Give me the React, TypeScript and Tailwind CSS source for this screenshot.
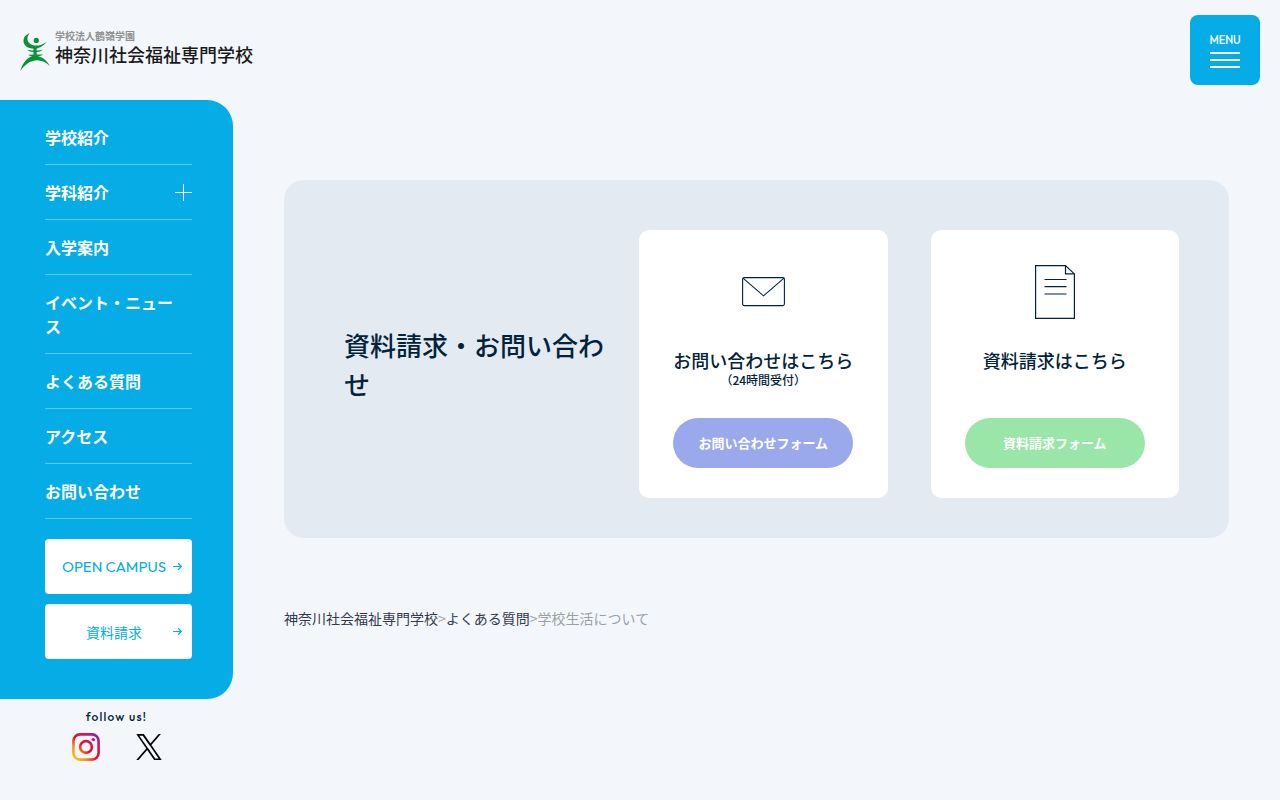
import type { ReactNode } from 'react';

interface NavItem {
  label: string;
  expandable?: boolean;
}

const NAV_ITEMS: NavItem[] = [
  { label: '学校紹介' },
  { label: '学科紹介', expandable: true },
  { label: '入学案内' },
  { label: 'イベント・ニュース' },
  { label: 'よくある質問' },
  { label: 'アクセス' },
  { label: 'お問い合わせ' },
];

function LogoMark() {
  return (
    <svg width="30" height="40" viewBox="0 0 30 40" fill="#0b9136" className="shrink-0" aria-hidden="true">
      <circle cx="16.3" cy="8.4" r="2.6" />
      <path d="M9.8 1.200C2 3.400 1 13 9.500 16c5.500 2 12.500.2 17-6.300-5 4-10.500 4.700-14.700 3C6.800 10.700 6 4.800 9.800 1.200Z" />
      <path d="M13.500 15.800h3.200c-.2 1.200-.2 2 0 2.700 2.100.1 4-.2 6-.8-1.700 1.500-3.600 2.100-6 2.300v2.400h6.500c-1.700 1.200-3.500 1.700-5.500 1.900 4.500.8 9 3.700 12 9.700-8-8.500-20.500-8.300-29.500 5.100C2.600 31 7 25.500 12 24.200c-1.600-.1-2.800-.6-3.800-1.500l5.300-.3V20c-2.700-.1-4.600-.7-6.200-2.200 2.200.6 4 .8 6.200.7Z" />
    </svg>
  );
}

function PlusIcon() {
  return (
    <svg width="17" height="17" viewBox="0 0 17 17" stroke="#fff" className="shrink-0" aria-hidden="true">
      <path d="M0 8.500h17M8.500 0v17" />
    </svg>
  );
}

function ArrowIcon() {
  return (
    <svg width="9" height="9" viewBox="0 0 9 9" fill="none" stroke="currentColor" strokeWidth="1.2" className="shrink-0" aria-hidden="true">
      <path d="M0 4.500h8.200M5 1.200 8.300 4.500 5 7.800" />
    </svg>
  );
}

function MailIcon() {
  return (
    <svg width="43" height="30" viewBox="0 0 43 30" fill="none" stroke="#02233a" strokeWidth="1.1" aria-hidden="true">
      <rect x="0.6" y="0.6" width="41.800" height="28" rx="1.500" />
      <path d="M1 1.100 21.500 18.800 42 1.100" />
    </svg>
  );
}

function DocumentIcon() {
  return (
    <svg width="40" height="54" viewBox="0 0 40 54" fill="none" stroke="#02233a" strokeWidth="1.200" aria-hidden="true">
      <path d="M.6.6h29.900l8.900 8.300v44.400H.6Z" />
      <path d="M30.500.6v8.300h8.900M9.500 14.500h22M9.500 21.700h22M9.500 29h22" />
    </svg>
  );
}

function InstagramIcon() {
  return (
    <svg width="28" height="28" viewBox="0 0 28 28" fill="none" aria-hidden="true">
      <defs>
        <linearGradient id="insta" x1="2" y1="26" x2="26" y2="2" gradientUnits="userSpaceOnUse">
          <stop offset="0" stopColor="#fdc70c" />
          <stop offset="0.25" stopColor="#f7921e" />
          <stop offset="0.45" stopColor="#e8101f" />
          <stop offset="0.75" stopColor="#d1145f" />
          <stop offset="1" stopColor="#8a1fb8" />
        </linearGradient>
      </defs>
      <rect x="1.400" y="1.400" width="25.200" height="25.200" rx="6.500" stroke="url(#insta)" strokeWidth="2.600" />
      <circle cx="14" cy="14" r="5.900" stroke="url(#insta)" strokeWidth="2.600" />
      <circle cx="21.400" cy="6.600" r="1.700" fill="url(#insta)" />
    </svg>
  );
}

function XIcon() {
  return (
    <svg width="26" height="26" viewBox="0 0 24 24" fill="#000" aria-hidden="true">
      <path d="M14.234 10.162 22.977 0h-2.072l-7.591 8.824L7.251 0H.258l9.168 13.343L.258 24H2.33l8.016-9.318L16.749 24h6.993zm-2.837 3.299-.929-1.329L3.076 1.560h3.182l5.965 8.532.929 1.329 7.754 11.090h-3.182z" />
    </svg>
  );
}

function SiteHeader() {
  return (
    <header className="flex h-[100px] items-center justify-between px-5">
      <a href="#" className="flex items-center gap-[5px] pt-1">
        <LogoMark />
        <span className="flex flex-col pb-2">
          <span className="text-[10px] leading-3 font-bold text-[#8f8f8f]">学校法人鶴嶺学園</span>
          <span className="text-lg leading-6 font-medium text-[#1a1a1a]">神奈川社会福祉専門学校</span>
        </span>
      </a>
      <button
        type="button"
        className="flex size-[70px] flex-col items-center justify-center gap-[6px] rounded-lg bg-[#05ace5] pt-px font-[Outfit,Lato,sans-serif] text-white"
      >
        <span className="text-[11px] leading-3 font-medium">MENU</span>
        <span className="flex w-[30px] flex-col gap-[5px]">
          <span className="h-[2px] bg-white" />
          <span className="h-[2px] bg-white" />
          <span className="h-[2px] bg-white" />
        </span>
      </button>
    </header>
  );
}

function SideButton({ children }: { children: ReactNode }) {
  return (
    <a href="#" className="flex h-[55px] items-center rounded bg-white px-[10px] text-sm text-[#05ace5]">
      <span className="flex-1 text-center whitespace-nowrap">{children}</span>
      <ArrowIcon />
    </a>
  );
}

function Sidebar() {
  return (
    <aside className="w-[233px] shrink-0">
      <div className="rounded-r-[26px] bg-[#05ace5] pt-[10px] pr-[41px] pb-10 pl-[45px]">
        <nav>
          <ul>
            {NAV_ITEMS.map((item) => (
              <li key={item.label} className="border-b border-white/35">
                <a href="#" className="flex items-center justify-between py-[15px] text-base leading-6 font-bold text-white">
                  <span className="max-w-[140px]">{item.label}</span>
                  {item.expandable && <PlusIcon />}
                </a>
              </li>
            ))}
          </ul>
        </nav>
        <div className="mt-5 flex flex-col gap-[10px]">
          <SideButton>
            <span className="font-[Outfit,Lato,sans-serif] text-[15px]">OPEN CAMPUS</span>
          </SideButton>
          <SideButton>資料請求</SideButton>
        </div>
      </div>
      <div className="flex flex-col items-center gap-2 pt-[10px]">
        <p className="font-[Outfit,Lato,sans-serif] text-xs leading-4 font-medium tracking-widest text-[#02233a]">
          follow us!
        </p>
        <div className="flex items-center gap-9">
          <a href="#" aria-label="Instagram">
            <InstagramIcon />
          </a>
          <a href="#" aria-label="X">
            <XIcon />
          </a>
        </div>
      </div>
    </aside>
  );
}

interface ContactCardProps {
  icon: ReactNode;
  title: string;
  note?: string;
  action: string;
  actionClass: string;
}

function ContactCard({ icon, title, note, action, actionClass }: ContactCardProps) {
  return (
    <div className="flex flex-col items-center rounded-[10px] bg-white px-5 pt-[35px] pb-[30px]">
      <div className="flex h-[54px] items-center">{icon}</div>
      <div className="mt-7 mb-8 flex-1 text-center font-medium whitespace-nowrap">
        <h3 className="text-lg leading-[27px]">{title}</h3>
        {note && <p className="text-xs leading-3">{note}</p>}
      </div>
      <a
        href="#"
        className={`flex h-[50px] w-[180px] items-center justify-center rounded-full text-[13px] font-bold text-white ${actionClass}`}
      >
        {action}
      </a>
    </div>
  );
}

export default function App() {
  return (
    <div className="min-h-screen bg-[#f3f7fc] font-['Noto_Sans_CJK_JP',sans-serif] text-[#02233a]">
      <SiteHeader />
      <div className="flex">
        <Sidebar />
        <main className="min-w-0 flex-1 px-[51px] pt-20">
          <section className="grid items-center gap-5 rounded-[20px] bg-[#e3eaf2] pt-[50px] pr-[50px] pb-10 pl-[60px] lg:grid-cols-[275fr_540fr]">
            <h2 className="text-[26px] leading-[39px] font-medium">資料請求・お問い合わせ</h2>
            <div className="grid grid-cols-2 gap-[43px]">
              <ContactCard
                icon={<MailIcon />}
                title="お問い合わせはこちら"
                note="（24時間受付）"
                action="お問い合わせフォーム"
                actionClass="bg-[#9aa8ec]"
              />
              <ContactCard
                icon={<DocumentIcon />}
                title="資料請求はこちら"
                action="資料請求フォーム"
                actionClass="bg-[#9ae6a8]"
              />
            </div>
          </section>
          {/* Breadcrumb */}
          <nav className="mt-[70px] text-sm leading-5 text-[#999fa6]">
            <a href="#" className="text-[#33394f]">神奈川社会福祉専門学校</a>
            <span>&gt;</span>
            <a href="#" className="text-[#33394f]">よくある質問</a>
            <span>&gt;</span>
            <span>学校生活について</span>
          </nav>
        </main>
      </div>
    </div>
  );
}
